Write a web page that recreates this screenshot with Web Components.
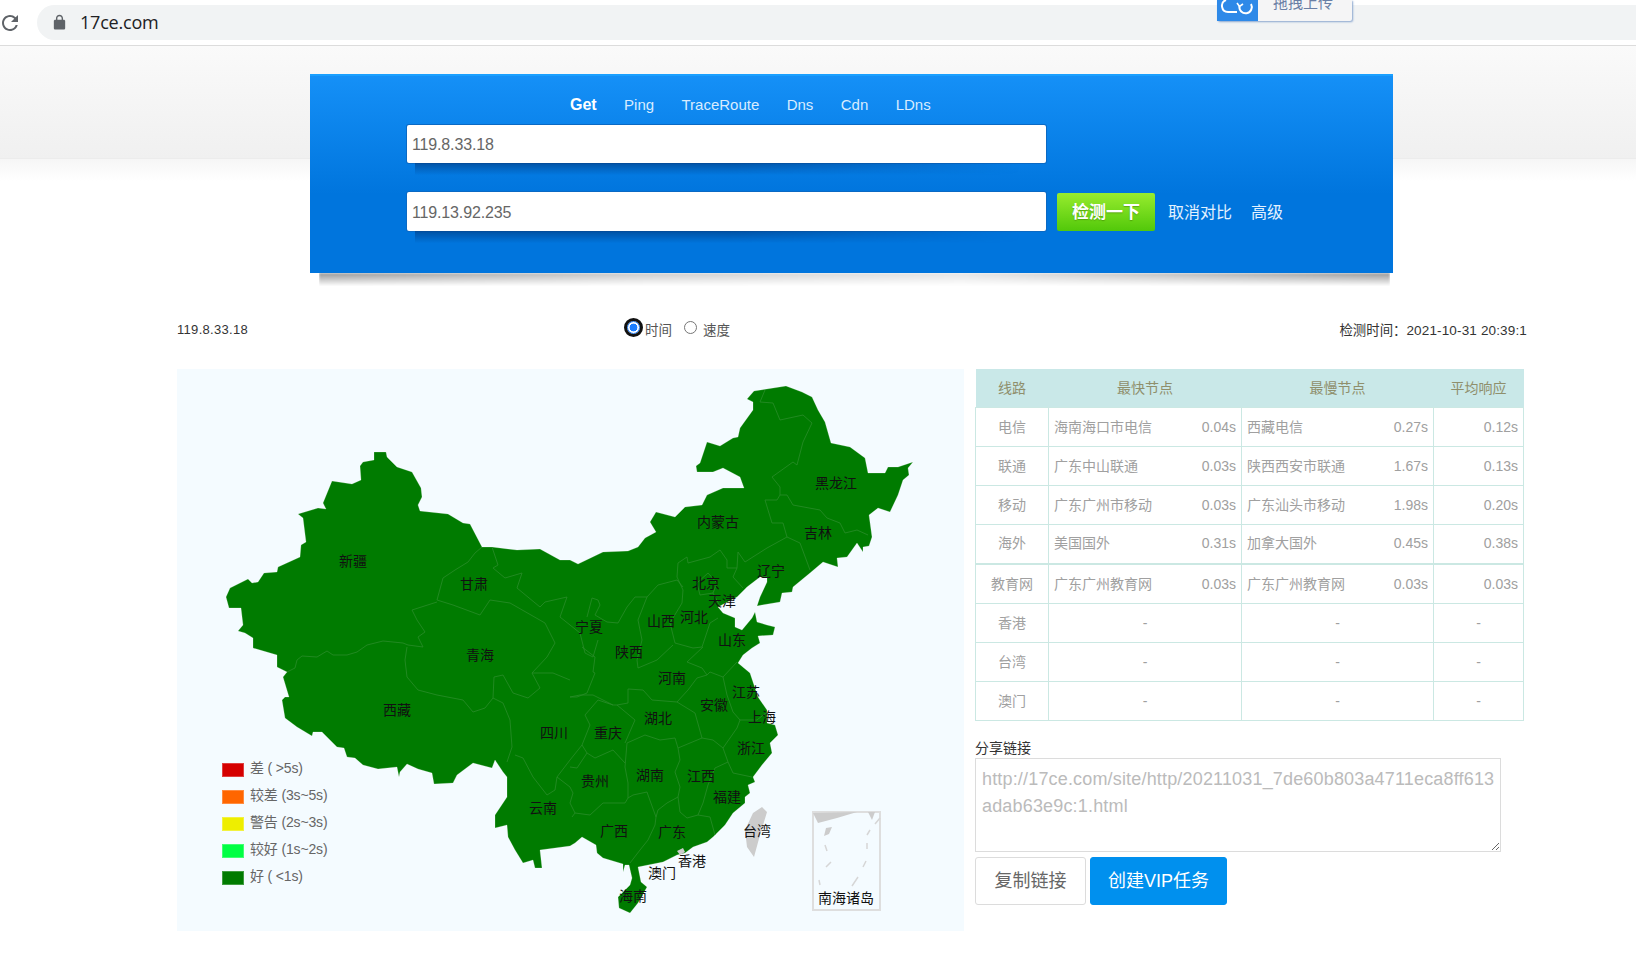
<!DOCTYPE html>
<html lang="zh-CN">
<head>
<meta charset="utf-8">
<title>17ce.com</title>
<style>
    html, body { margin: 0; background: #fff; }
    body { font-family: "Liberation Sans", "Noto Sans CJK SC", sans-serif; font-size: 14px; color: #333; }
</style>
</head>
<body>
<browser-bar url="17ce.com"></browser-bar>
<search-hero></search-hero>
<main-wrap>
    <info-row></info-row>
    <result-area>
        <china-map><map-legend></map-legend></china-map>
        <side-column>
            <stats-table></stats-table>
            <share-box></share-box>
        </side-column>
    </result-area>
</main-wrap>

<script>
const SANS = `"Liberation Sans", "Noto Sans CJK SC", sans-serif`;

function el(name, fn) {
    customElements.define(name, fn);
}

el("browser-bar", class extends HTMLElement {
    connectedCallback() {
        this.attachShadow({mode: "open"}).innerHTML = `
<style>
    :host { display: flex; align-items: center; height: 45px; border-bottom: 1px solid #dcdcdc; box-sizing: content-box; background: #fff; position: relative; font-family: ${SANS}; }
    .reload { width: 24px; height: 24px; margin-left: -2px; fill: #5f6368; flex: none; }
    .addr { flex: 1; height: 35px; margin: 0 0 0 15px; border-radius: 18px 0 0 18px; background: #f1f3f4; display: flex; align-items: center; }
    .lock { width: 17px; height: 17px; margin-left: 14px; fill: #5f6368; flex: none; }
    .url { margin: 0 0 2px 12px; font: 18px "Open Sans", ${SANS}; color: #202124; letter-spacing: -.2px; }
</style>
<svg class="reload" viewBox="0 0 24 24"><path d="M17.65 6.35A7.96 7.96 0 0 0 12 4c-4.42 0-7.99 3.58-7.99 8s3.57 8 7.99 8c3.73 0 6.84-2.55 7.73-6h-2.08A5.99 5.99 0 0 1 12 18c-3.31 0-6-2.69-6-6s2.69-6 6-6c1.66 0 3.14.69 4.22 1.78L13 11h7V4l-2.35 2.35z"/></svg>
<div class="addr">
    <svg class="lock" viewBox="0 0 24 24"><path d="M18 8h-1V6c0-2.76-2.24-5-5-5S7 3.24 7 6v2H6c-1.1 0-2 .9-2 2v10c0 1.1.9 2 2 2h12c1.1 0 2-.9 2-2V10c0-1.1-.9-2-2-2zM9 6c0-1.66 1.34-3 3-3s3 1.34 3 3v2H9V6z"/></svg>
    <span class="url">${this.getAttribute("url")}</span>
</div>
<upload-tab></upload-tab>`;
    }
});

// the floating upload tab that is cut off by the top of the window
el("upload-tab", class extends HTMLElement {
    connectedCallback() {
        this.attachShadow({mode: "open"}).innerHTML = `
<style>
    :host { position: absolute; left: 1217px; top: 0; width: 135px; height: 21px; display: flex; border-radius: 0 0 2px 2px; box-shadow: 1px 1px 2px #8aa6cf; background: #f5f5f6; font-family: ${SANS}; }
    .ico { width: 41px; height: 21px; background: #2e89e8; flex: none; }
    .txt { flex: 1; height: 21px; overflow: hidden; padding-left: 15px; }
    .txt span { display: block; margin-top: -7px; line-height: 20px; font-size: 15px; color: #6a7fa5; }
    svg { display: block; fill: none; stroke: #fff; stroke-width: 2; }
</style>
<div class="ico"><svg width="41" height="21" viewBox="0 0 41 21"><path d="M20 12H11a6.2 6.2 0 0 1-2-12"/><path d="M34 4a6.2 6.2 0 1 1-11.5 2"/><path d="M20 3l2.5 3.5L26 4" stroke-width="1.6"/></svg></div>
<div class="txt"><span>拖拽上传</span></div>`;
    }
});

el("search-hero", class extends HTMLElement {
    connectedCallback() {
        this.attachShadow({mode: "open"}).innerHTML = `
<style>
    :host {
        display: block; padding-top: 28px; font-family: ${SANS};
        background:
            linear-gradient(#fafafa, #f0f0f0) 0 0 / 100% 112px no-repeat,
            linear-gradient(#ececec, #ececec) 0 112px / 100% 1px no-repeat,
            linear-gradient(#f6f6f6, #fff) 0 113px / 100% 22px no-repeat;
    }
    .panel {
        position: relative; width: 1083px; height: 199px; margin-left: 310px; box-sizing: border-box;
        padding: 19px 0 0 97px; border-top: 2px solid #1aa0ff;
        background: linear-gradient(#1590f7, #0075dd 60%); color: #fff;
    }
    .panel::after {
        content: ""; position: absolute; left: 9px; right: 3px; top: 100%; height: 13px;
        background: linear-gradient(rgba(0,0,0,.42), transparent);
        filter: blur(1px);
        -webkit-mask-image: linear-gradient(to right, #000 0, rgba(0,0,0,.5) 30%, rgba(0,0,0,.25) 60%, #000 100%);
    }
    .tabs { display: flex; gap: 27.4px; margin-left: 163px; height: 20px; line-height: 20px; font-size: 15px; color: #d8ecff; margin-bottom: 10px; }
    .tabs b { color: #fff; font-size: 16px; }
    .row { display: flex; align-items: center; height: 38px; }
    .row + .row { height: 39px; margin-top: 29px; }
    .row + .row search-field { padding-top: 3px; }
    search-field { width: 639px; }
    .go {
        width: 98px; height: 38px; margin: 1px 13px 0 11px; border-radius: 2px; line-height: 40px; text-align: center;
        background: linear-gradient(#97ec2e, #52c80a); font-size: 17px; font-weight: bold; color: #fff; text-shadow: 0 1px 1px rgba(60,120,0,.5);
    }
    .lnk { font-size: 16px; color: #e4f2ff; margin: 0 19px 2px 0; }
</style>
<div class="panel">
    <div class="tabs"><b>Get</b><span>Ping</span><span>TraceRoute</span><span>Dns</span><span>Cdn</span><span>LDns</span></div>
    <div class="row"><search-field value="119.8.33.18"></search-field></div>
    <div class="row"><search-field value="119.13.92.235"></search-field><div class="go">检测一下</div><span class="lnk">取消对比</span><span class="lnk">高级</span></div>
</div>`;
    }
});

el("search-field", class extends HTMLElement {
    connectedCallback() {
        this.attachShadow({mode: "open"}).innerHTML = `
<style>
    :host { display: flex; align-items: center; box-sizing: border-box; position: relative; height: 100%; padding-top: 1px; background: #fff; border-radius: 2px; box-shadow: 0 0 0 1px #0a69c4; font-family: ${SANS}; }
    :host::after {
        content: ""; position: absolute; left: 8px; right: 0; top: 100%; height: 12px;
        background: linear-gradient(rgba(0,60,130,.65), transparent);
        -webkit-mask-image: linear-gradient(to right, #000 0, #000 50%, transparent 96%);
    }
    span { display: block; padding-left: 5px; font-size: 16px; letter-spacing: -.15px; color: #666; }
</style>
<span>${this.getAttribute("value")}</span>`;
    }
});

el("main-wrap", class extends HTMLElement {
    connectedCallback() {
        this.attachShadow({mode: "open"}).innerHTML = `
<style>
    :host { display: block; width: 1350px; margin-left: 177px; padding-top: 46px; }
</style>
<slot></slot>`;
    }
});

el("info-row", class extends HTMLElement {
    connectedCallback() {
        this.attachShadow({mode: "open"}).innerHTML = `
<style>
    :host { display: grid; grid-template-columns: 450px 1fr auto; align-items: center; height: 20px; margin-bottom: 30px; font: 13px ${SANS}; color: #333; }
    .ip { letter-spacing: .3px; }
    .when { font-size: 13.5px; letter-spacing: .15px; }
    .cn { font-size: 13.4px; letter-spacing: 0; }
    .modes { display: flex; align-items: center; font-size: 13.5px; color: #555; margin-top: -1px; }
    input { appearance: none; box-sizing: border-box; width: 13px; height: 13px; margin: 0 5px 3px 0; flex: none; border-radius: 50%; border: 1px solid #767676; background: #fff; }
    input:checked { border-color: #1a7dff; background: radial-gradient(circle, #1a7dff 0 3.6px, #fff 4.2px); outline: 3px solid #111; }
    label { display: flex; align-items: center; }
    label + label { margin-left: 12px; }
    label + label input { margin-right: 6px; }
</style>
<span class="ip">119.8.33.18</span>
<div class="modes">
    <label><input type="radio" name="m" checked>时间</label>
    <label><input type="radio" name="m">速度</label>
</div>
<span class="when"><span class="cn">检测时间：</span>2021-10-31 20:39:1</span>`;
    }
});

el("result-area", class extends HTMLElement {
    connectedCallback() {
        this.attachShadow({mode: "open"}).innerHTML = `
<style>
    :host { display: flex; gap: 11px; align-items: flex-start; }
</style>
<slot></slot>`;
    }
});

el("side-column", class extends HTMLElement {
    connectedCallback() {
        this.attachShadow({mode: "open"}).innerHTML = `
<style>
    :host { display: block; width: 549px; flex: none; }
</style>
<slot></slot>`;
    }
});

// page coordinates, the svg viewBox starts where the panel starts
const OUTLINE = "374,452 386,452 387,457 397,467 412,472 421,488 422,497 418,505 420,511 448,514 463,523 470,524 482,547 492,547 517,550 540,549 560,560 570,560 578,564 603,552 628,551 638,547 645,538 656,532 650,522 656,512 675,517 685,507 702,505 707,495 723,488 744,488 740,477 723,468 713,472 697,472 696,466 700,463 707,442 720,446 733,438 738,437 740,428 753,410 753,402 747,399 754,391 786,386 802,392 812,397 818,410 825,422 831,443 850,447 865,458 868,473 885,473 888,467 898,467 913,462 908,468 909,475 903,480 898,495 890,512 878,508 869,515 872,537 869,546 863,547 863,552 857,543 847,557 837,558 838,567 823,562 810,573 793,587 792,592 782,593 780,602 762,605 757,606 760,597 767,582 767,577 760,577 747,587 737,597 718,607 723,613 735,618 735,627 742,630 752,618 755,612 757,622 767,625 775,627 773,635 758,636 760,643 752,648 743,655 738,663 750,673 758,697 767,710 767,723 775,725 778,735 770,743 772,753 762,765 753,777 755,782 748,785 750,793 745,797 745,803 733,813 725,825 713,837 707,842 693,847 685,853 677,855 663,862 648,865 638,867 641,882 647,887 638,903 630,913 619,908 618,897 630,885 632,878 629,865 625,865 623,872 623,864 603,858 597,853 596,845 582,837 575,843 570,846 540,850 542,868 535,868 533,860 523,863 515,850 508,837 507,825 495,828 495,815 507,797 507,777 503,772 495,760 492,768 473,763 457,775 453,783 434,784 432,773 418,769 407,764 400,772 399,777 397,767 378,769 363,765 355,758 347,757 344,748 337,747 322,732 313,732 312,736 297,727 285,718 282,700 285,697 289,697 283,677 287,672 277,667 277,655 253,648 253,638 245,633 238,631 243,625 241,608 229,608 226,597 230,588 248,579 252,583 258,582 264,573 277,572 278,567 300,557 301,545 306,542 303,518 298,514 318,508 326,509 323,503 332,481 352,484 361,480 360,466 363,462 374,460";

const BORDERS = [
    "482,547 475,553 468,562 455,570 443,578 437,600",
    "437,602 412,610 417,620 425,632 418,637 423,647 408,645 403,643 383,641 367,645 357,652 347,655 333,655 327,651 317,657 302,656 297,660 295,668 287,672",
    "407,647 405,660 407,677 418,690 437,695 463,700 473,712 485,708 493,698",
    "493,698 503,703 510,720 512,747 507,762",
    "493,698 494,677 503,675 513,693 528,698 540,688 532,673 543,673 553,673 570,680",
    "437,600 453,605 480,615 490,600 510,603 545,623 555,643 547,657 532,673",
    "492,547 498,565 493,568 505,578 522,573 517,588 540,607 545,602 567,597 560,617 570,625 580,633 585,653 593,657 598,640",
    "587,617 592,598 598,600 600,605 595,615 607,622 618,623 627,607 635,597 647,597 658,585 677,580 683,587",
    "677,577 678,563 687,557 688,563 710,557 720,550 727,560 727,568 737,568 738,552 745,562 767,548 787,537 783,523 772,523 765,500 777,500 780,495 787,495 793,505 820,510 827,518 840,523 845,533 857,530 868,535",
    "780,495 780,487 772,477 793,462 797,465 803,442 812,423 803,415 780,420 773,403 760,402 765,390",
    "787,537 800,543 810,570",
    "737,568 733,577 743,588",
    "677,577 683,590 682,603 670,623 675,643 693,648 702,647 710,623 718,618",
    "697,583 708,573 717,583 713,593 700,595 697,583",
    "713,593 720,606",
    "647,597 638,620 642,640 637,660 638,668 657,660 673,645",
    "628,689 643,690 652,700 677,702 695,713 702,738",
    "677,702 688,690 697,678 707,675 702,668 687,662 703,647",
    "707,675 710,672 723,677 737,662",
    "723,677 727,695 733,712 740,720 757,720 767,712",
    "702,738 713,740 723,748 737,728 740,720",
    "723,748 728,762 733,773 752,777",
    "728,762 715,768 708,785 703,803 698,815 687,818 680,812 678,797",
    "698,815 710,817 715,835",
    "702,738 678,748 680,760 675,772 680,787 678,797 667,803 658,810 656,817 655,825 648,840 640,850 630,863",
    "656,817 648,795 647,792 633,795 628,798",
    "678,748 675,738 660,740 645,735 627,743 625,767 628,783 628,798 625,803 603,803 590,815 575,813 572,817",
    "628,689 628,703 617,705 635,720 625,743",
    "625,763 613,750 595,758 587,753 582,745 590,725 585,715 598,700 613,705 617,705",
    "582,647 595,657 593,672 595,673 587,693 577,697 570,697 580,695 593,695 613,705",
    "515,755 523,758 533,777 547,795 555,790 557,777 570,760 582,745",
    "570,767 577,768 587,753",
    "557,777 570,787 573,793 570,803 575,813"
];

const LABELS = [
    ["新疆",353,561],["甘肃",474,584],["青海",480,655],["西藏",397,710],["四川",554,733],["云南",543,808],
    ["黑龙江",836,483],["吉林",818,533],["内蒙古",718,522],["辽宁",771,571],["北京",706,583],["天津",722,601],
    ["河北",694,617],["山西",661,621],["宁夏",589,627],["陕西",629,652],["山东",732,640],["河南",672,678],
    ["江苏",746,692],["安徽",714,705],["上海",762,717],["湖北",658,718],["重庆",608,733],["浙江",751,748],
    ["湖南",650,775],["江西",701,776],["贵州",595,781],["福建",727,797],["广西",614,831],["广东",672,832],
    ["台湾",757,831],["香港",692,861],["澳门",662,873],["海南",633,896],["南海诸岛",846,898]
];

el("china-map", class extends HTMLElement {
    connectedCallback() {
        const lines = BORDERS.map(p => `<polyline points="${p}"/>`).join("");
        const names = LABELS.map(([t, x, y]) => `<text x="${x}" y="${y}">${t}</text>`).join("");
        this.attachShadow({mode: "open"}).innerHTML = `
<style>
    :host { display: block; position: relative; width: 787px; height: 562px; flex: none; background: #f4fbff; font-family: ${SANS}; }
    svg { display: block; }
    .land { fill: #007b00; stroke: rgba(255,255,255,.35); stroke-width: .6; stroke-linejoin: round; }
    .lines polyline { fill: none; stroke: #2a8d2a; stroke-width: .8; stroke-linejoin: round; }
    .gray { fill: #cccccc; }
    .box { fill: none; stroke: #dedede; stroke-width: 2; }
    .dash { fill: none; stroke: #d6d6d6; stroke-width: 1.5; }
    text { font-size: 14px; fill: #111; text-anchor: middle; dominant-baseline: central; }
</style>
<svg width="787" height="562" viewBox="177 369 787 562">
    <polygon class="land" points="${OUTLINE}"/>
    <g class="lines">${lines}</g>
    <polygon class="gray" points="762,807 767,812 760,835 754,857 747,847 745,830 753,813"/>
    <polygon class="gray" points="677,851 683,848 685,852 680,855"/>
    <rect class="box" x="813" y="812" width="67" height="98"/>
    <polygon class="gray" points="813,813 857,812 837,818 818,823"/>
    <polygon class="gray" points="868,812 875,812 872,820"/>
    <polygon class="gray" points="826,828 832,827 829,834 824,836"/>
    <path class="dash" d="M880 818l-5 6M870 830l-3 5M867 843v6M825 845l2 6M866 861l-3 6M831 862l-5 5M858 877l-6 9M819 880l1 5"/>
    ${names}
</svg>
<slot></slot>`;
    }
});

el("map-legend", class extends HTMLElement {
    connectedCallback() {
        const rows = [["#d50000","差 ( >5s)"],["#ff6600","较差 (3s~5s)"],["#eeee00","警告 (2s~3s)"],["#00ff44","较好 (1s~2s)"],["#007b00","好 ( <1s)"]];
        this.attachShadow({mode: "open"}).innerHTML = `
<style>
    :host { position: absolute; left: 45px; top: 384px; display: grid; grid-auto-rows: 27px; font: 14px ${SANS}; color: #666; letter-spacing: -.15px; }
    div { display: flex; align-items: center; }
    i { width: 22px; height: 14px; margin: 6px 6px 0 0; display: block; box-shadow: inset 0 0 0 1px rgba(255,255,255,.25); }
</style>
${rows.map(([c, t]) => `<div><i style="background:${c}"></i>${t}</div>`).join("")}`;
    }
});

el("stats-table", class extends HTMLElement {
    connectedCallback() {
        const rows = [
            ["电信","海南海口市电信","0.04s","西藏电信","0.27s","0.12s"],
            ["联通","广东中山联通","0.03s","陕西西安市联通","1.67s","0.13s"],
            ["移动","广东广州市移动","0.03s","广东汕头市移动","1.98s","0.20s"],
            ["海外","美国国外","0.31s","加拿大国外","0.45s","0.38s"],
            ["教育网","广东广州教育网","0.03s","广东广州教育网","0.03s","0.03s"],
            ["香港"],["台湾"],["澳门"]
        ];
        const body = rows.map((r, i) => {
            const cls = i == 3 ? ' class="thick"' : "";
            if (r.length == 1) return `<tr${cls}><td class="c">${r[0]}</td><td class="c">-</td><td class="c">-</td><td class="c">-</td></tr>`;
            return `<tr${cls}><td class="c">${r[0]}</td>
                <td><div class="pair"><span>${r[1]}</span><span>${r[2]}</span></div></td>
                <td><div class="pair"><span>${r[3]}</span><span>${r[4]}</span></div></td>
                <td class="r">${r[5]}</td></tr>`;
        }).join("");
        this.attachShadow({mode: "open"}).innerHTML = `
<style>
    :host { display: block; font: 14px ${SANS}; color: #a0a0a0; }
    table { width: 549px; table-layout: fixed; border-collapse: collapse; }
    th { height: 38px; padding: 0 0 2px; box-sizing: border-box; background: #c9e8e8; font-weight: normal; color: #8f8f6c; }
    td { height: 39px; box-sizing: border-box; padding: 0 5px; line-height: 20px; border: 1px solid #cbe8e3; }
    tr.thick td { height: 40px; border-bottom-width: 2px; padding-bottom: 1px; }
    .c { text-align: center; }
    .r { text-align: right; }
    .pair { display: flex; justify-content: space-between; align-items: center; height: 20px; }
</style>
<table>
    <colgroup><col style="width:73px"><col style="width:193px"><col style="width:192px"><col></colgroup>
    <tr><th>线路</th><th>最快节点</th><th>最慢节点</th><th>平均响应</th></tr>
    ${body}
</table>`;
    }
});

el("share-box", class extends HTMLElement {
    connectedCallback() {
        this.attachShadow({mode: "open"}).innerHTML = `
<style>
    :host { display: block; margin-top: 19px; font: 14px ${SANS}; color: #333; }
    .lbl { height: 18px; line-height: 17px; }
    .area {
        width: 526px; height: 94px; box-sizing: border-box; padding: 7px 6px; border: 1px solid #dcdcdc;
        font-size: 18px; line-height: 27px; letter-spacing: .17px; color: #bbb; white-space: nowrap; overflow: hidden; resize: both;
    }
    .btns { display: flex; gap: 4px; margin-top: 5px; }
    .btn { height: 48px; line-height: 47px; box-sizing: border-box; border: 1px solid #dcdcdc; border-radius: 3px; text-align: center; font-size: 18px; color: #666; }
    .a { width: 111px; }
    .b { width: 137px; background: #0090ee; border-color: #0090ee; color: #fff; }
</style>
<div class="lbl">分享链接</div>
<div class="area">http://17ce.com/site/http/20211031_7de60b803a4711eca8ff613<br>adab63e9c:1.html</div>
<div class="btns"><div class="btn a">复制链接</div><div class="btn b">创建VIP任务</div></div>`;
    }
});
</script>
</body>
</html>
